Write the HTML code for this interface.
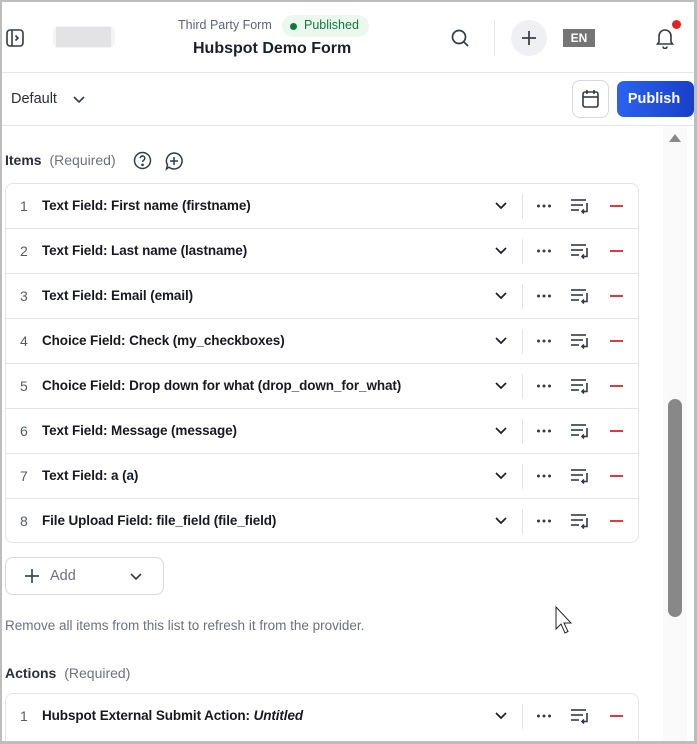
<!DOCTYPE html>
<html><head><meta charset="utf-8"><style>
*{box-sizing:border-box;margin:0;padding:0}
html,body{width:697px;height:744px;overflow:hidden}
body{background:#fff;font-family:"Liberation Sans",sans-serif;color:#1b1f2a;position:relative}
.frame{position:absolute;left:0;top:0;width:697px;height:744px;border:2px solid #bdbdbd;border-right-width:3px;border-bottom-width:3px;pointer-events:none;z-index:10}
.abs{position:absolute}
.hdr{position:absolute;left:0;top:0;width:697px;height:73px;border-bottom:1px solid #e6e7ea}
.bar2{position:absolute;left:0;top:73px;width:697px;height:53px;border-bottom:1px solid #e6e7ea}
.card{position:absolute;left:5px;width:634px;border:1px solid #e3e4e8;border-radius:8px;background:#fff}
.row{position:relative;height:45px;border-bottom:1px solid #e3e4e8}
.row:last-child{border-bottom:none}
.num{position:absolute;left:14px;top:14px;font-size:14px;color:#555b66}
.lbl{position:absolute;left:36px;top:14px;font-size:13.5px;font-weight:bold;color:#16191f;letter-spacing:-0.1px}
.ic{position:absolute;top:0}
.sep{position:absolute;left:516px;top:10px;width:1px;height:25px;background:#e3e4e8}
</style></head><body>
<div class="frame"></div>
<div class="hdr">
 <svg class="abs" style="left:6px;top:29px" width="18" height="18" viewBox="0 0 18 18" fill="none" stroke="#333a48" stroke-width="1.6"><rect x="1" y="1" width="16" height="16" rx="3"/><line x1="6" y1="1" x2="6" y2="17"/><path d="M9.5 6.5l2.5 2.5-2.5 2.5"/></svg>
 <div class="abs" style="left:53px;top:26px;width:62px;height:22px;background:#f4f4f6;border-radius:6px"></div>
 <div class="abs" style="left:56px;top:27px;width:55px;height:20px;background:#e3e3e6"></div>
 <div class="abs" style="left:178px;top:18px;font-size:12.5px;color:#5e6472">Third Party Form</div>
 <div class="abs" style="left:282px;top:15px;width:87px;height:22px;background:#eaf8ee;border-radius:11px"></div>
 <div class="abs" style="left:290px;top:23px;width:7px;height:7px;border-radius:50%;background:#0f7a3f"></div>
 <div class="abs" style="left:304px;top:18px;font-size:12.5px;color:#137a42">Published</div>
 <div class="abs" style="left:193px;top:40px;font-size:16px;font-weight:bold;color:#1b1f2a">Hubspot Demo Form</div>
 <svg class="abs" style="left:450px;top:28px" width="20" height="20" viewBox="0 0 20 20" fill="none" stroke="#333a48" stroke-width="1.7"><circle cx="9" cy="9" r="6.5"/><line x1="13.8" y1="13.8" x2="18" y2="18"/></svg>
 <div class="abs" style="left:494px;top:20px;width:1px;height:36px;background:#e3e4e8"></div>
 <div class="abs" style="left:511px;top:20px;width:36px;height:36px;border-radius:50%;background:#eef0f4"></div>
 <svg class="abs" style="left:521px;top:30px" width="16" height="16" viewBox="0 0 16 16" stroke="#333a48" stroke-width="1.7"><line x1="8" y1="1" x2="8" y2="15"/><line x1="1" y1="8" x2="15" y2="8"/></svg>
 <div class="abs" style="left:563px;top:29px;width:32px;height:18px;background:#757575;color:#fff;font-size:12px;font-weight:bold;text-align:center;line-height:18px">EN</div>
 <svg class="abs" style="left:655px;top:27px" width="20" height="22" viewBox="0 0 20 22" fill="none" stroke="#333a48" stroke-width="1.6"><path d="M4 15V9a6 6 0 0112 0v6l1.5 2h-15z"/><path d="M8 19.5a2 2 0 004 0"/></svg>
 <div class="abs" style="left:672px;top:20px;width:9px;height:9px;border-radius:50%;background:#e02424"></div>
</div>
<div class="bar2">
 <div class="abs" style="left:11px;top:18px;font-size:14.5px;color:#2a2f3a">Default</div>
 <svg class="abs" style="left:72px;top:22px" width="14" height="10" viewBox="0 0 14 10" fill="none" stroke="#333a48" stroke-width="1.6"><path d="M2 2l5 5 5-5"/></svg>
 <div class="abs" style="left:572px;top:7px;width:37px;height:38px;border:1px solid #d6d8dd;border-radius:8px"></div>
 <svg class="abs" style="left:581px;top:16px" width="19" height="20" viewBox="0 0 19 20" fill="none" stroke="#333a48" stroke-width="1.6"><rect x="2" y="3" width="15" height="15" rx="2"/><line x1="2" y1="8" x2="17" y2="8"/><line x1="6" y1="1" x2="6" y2="5"/><line x1="13" y1="1" x2="13" y2="5"/></svg>
 <div class="abs" style="left:617px;top:8px;width:77px;height:36px;border-radius:7px;background:linear-gradient(90deg,#2a63f0,#1a3fc8);color:#fff;font-size:14.5px;font-weight:bold;line-height:36px;text-align:center;padding-right:3px">Publish</div>
</div>
<div class="abs" style="left:663px;top:126px;width:24px;height:618px;background:#fafafa"></div>
<svg class="abs" style="left:667px;top:131px" width="16" height="12"><path d="M2 11L8 3l6 8z" fill="#888"/></svg>
<div class="abs" style="left:668px;top:399px;width:14px;height:218px;border-radius:7px;background:#888"></div>

<div class="abs" style="left:5px;top:152px;font-size:14px;font-weight:bold;color:#2a2f3a">Items <span style="font-weight:normal;color:#6b7180;margin-left:4px">(Required)</span></div>
<svg class="abs" style="left:133px;top:151px" width="19" height="19" viewBox="0 0 19 19" fill="none" stroke="#333a48" stroke-width="1.5"><circle cx="9.5" cy="9.5" r="8"/><path d="M7.2 7.2a2.3 2.3 0 114 1.6c-.8.6-1.7 1-1.7 2.2"/><circle cx="9.5" cy="13.8" r=".6" fill="#333a48"/></svg>
<svg class="abs" style="left:164px;top:151px" width="20" height="20" viewBox="0 0 20 20" fill="none" stroke="#333a48" stroke-width="1.5"><path d="M10 2a8 8 0 11-5 14.2L2.5 18l1-4A8 8 0 0110 2z"/><line x1="10" y1="6" x2="10" y2="14"/><line x1="6" y1="10" x2="14" y2="10"/></svg>

<div class="card" style="top:183px;height:360px" id="c1"></div>
<div class="abs" style="left:5px;top:557px;width:159px;height:38px;border:1px solid #d6d8dd;border-radius:8px"></div>
<svg class="abs" style="left:24px;top:568px" width="16" height="16" stroke="#333a48" stroke-width="1.6"><line x1="8" y1="1" x2="8" y2="15"/><line x1="1" y1="8" x2="15" y2="8"/></svg>
<div class="abs" style="left:50px;top:568px;font-size:14.5px;color:#6b7180">Add</div>
<svg class="abs" style="left:129px;top:572px" width="14" height="10" fill="none" stroke="#333a48" stroke-width="1.6"><path d="M2 2l5 5 5-5"/></svg>
<div class="abs" style="left:5px;top:618px;font-size:13.5px;color:#6b7180">Remove all items from this list to refresh it from the provider.</div>
<svg class="abs" style="left:555px;top:606px" width="20" height="30" viewBox="0 0 20 30"><path d="M1 1v22l5-5 4 9 3-1.5-4-8.5h7z" fill="#fff" stroke="#222" stroke-width="1"/></svg>
<div class="abs" style="left:5px;top:665px;font-size:14px;font-weight:bold;color:#2a2f3a">Actions <span style="font-weight:normal;color:#6b7180;margin-left:4px">(Required)</span></div>
<div class="card" style="top:693px;height:60px" id="c2"></div>
<script>
function icons(){return '<svg class="ic" style="left:485px" width="150" height="45" viewBox="0 0 150 45" fill="none" stroke="#1b1f2a" stroke-width="1.7"><path d="M5 19l5 5 5-5"/></svg><div class="sep"></div><svg class="ic" style="left:525px" width="110" height="45" viewBox="0 0 110 45"><circle cx="7.5" cy="22" r="1.5" fill="#333a48"/><circle cx="13" cy="22" r="1.5" fill="#333a48"/><circle cx="18.5" cy="22" r="1.5" fill="#333a48"/><g stroke="#333a48" stroke-width="1.6" fill="none"><line x1="40" y1="16" x2="55" y2="16"/><line x1="40" y1="21" x2="52" y2="21"/><line x1="40" y1="26" x2="48" y2="26"/><path d="M56 19v8.5h-5"/><path d="M53 25.5l-2 2 2 2"/></g><line x1="79" y1="22" x2="92" y2="22" stroke="#e0393e" stroke-width="2"/></svg>';}
var items=["Text Field: First name (firstname)","Text Field: Last name (lastname)","Text Field: Email (email)","Choice Field: Check (my_checkboxes)","Choice Field: Drop down for what (drop_down_for_what)","Text Field: Message (message)","Text Field: a (a)","File Upload Field: file_field (file_field)"];
var h='';items.forEach(function(t,i){h+='<div class="row"><div class="num">'+(i+1)+'</div><div class="lbl">'+t+'</div>'+icons()+'</div>';});
document.getElementById('c1').innerHTML=h;
document.getElementById('c2').innerHTML='<div class="row"><div class="num">1</div><div class="lbl">Hubspot External Submit Action: <i>Untitled</i></div>'+icons()+'</div>';
</script>
</body></html>
